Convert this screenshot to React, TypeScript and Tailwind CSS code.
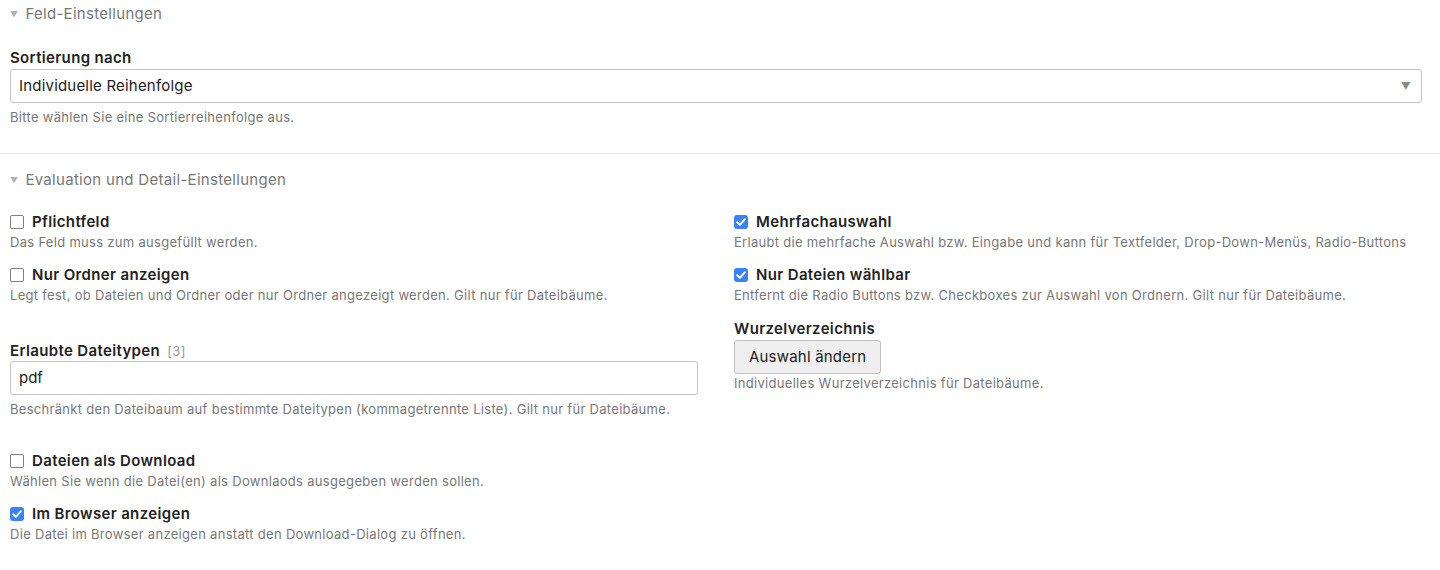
const font = { fontFamily: 'Inter, "Liberation Sans", Arial, sans-serif' };

function Checkbox({ checked }: { checked?: boolean }) {
  if (checked) {
    return (
      <span className="flex h-[14px] w-[14px] shrink-0 items-center justify-center rounded-[3px] bg-[#3a82f6]">
        <svg viewBox="0 0 14 14" className="h-[14px] w-[14px]">
          <path d="M3.2 7.2 L5.9 9.8 L10.8 4.3" fill="none" stroke="#fff" strokeWidth="1.9" strokeLinecap="round" strokeLinejoin="round" />
        </svg>
      </span>
    );
  }
  return <span className="h-[14px] w-[14px] shrink-0 rounded-[2px] border-[1.5px] border-[#808080] bg-white" />;
}

function CheckField({ label, help, checked, className = "" }: { label: string; help: string; checked?: boolean; className?: string }) {
  return (
    <div className={className}>
      <label className="flex items-center gap-2 text-[15px] leading-[18px] font-semibold tracking-[0.35px] text-[#222]">
        <Checkbox checked={checked} />
        {label}
      </label>
      <p className="mt-[3px] text-[13px] leading-[16px] tracking-[0.3px] text-[#777]">{help}</p>
    </div>
  );
}

function Legend({ children }: { children: string }) {
  return (
    <div className="flex items-center gap-[7px] text-[15px] leading-[20px] tracking-[0.3px] text-[#777]">
      <span className="text-[8px] text-[#b0b0b0]">▼</span>
      {children}
    </div>
  );
}

export default function App() {
  return (
    <div className="min-h-[570px] bg-white pt-[4px] text-[#222]" style={font}>
      <div className="pl-[10px] pr-[18px]">
        <Legend>Feld-Einstellungen</Legend>

        <div className="mt-[25px]">
          <div className="text-[15px] leading-[18px] font-semibold tracking-[0.35px]">Sortierung nach</div>
          <div className="mt-[2px] flex h-[34px] items-center justify-between rounded-[3px] border border-[#c4c4c4] pl-[8px] pr-[10px] text-[15px] tracking-[0.2px]">
            <span>Individuelle Reihenfolge</span>
            <span className="text-[10px] text-[#888]">▼</span>
          </div>
          <p className="mt-[6px] text-[13px] leading-[16px] tracking-[0.3px] text-[#777]">Bitte wählen Sie eine Sortierreihenfolge aus.</p>
        </div>
      </div>

      <div className="mt-[28px] border-t border-[#e8e8e8]" />

      <div className="pl-[10px] pr-[18px] pt-[16px]">
        <Legend>Evaluation und Detail-Einstellungen</Legend>

        <div className="mt-[23px] grid grid-cols-[724px_1fr]">
          <div>
            <CheckField label="Pflichtfeld" help="Das Feld muss zum ausgefüllt werden." />
            <CheckField
              className="mt-[16px]"
              label="Nur Ordner anzeigen"
              help="Legt fest, ob Dateien und Ordner oder nur Ordner angezeigt werden. Gilt nur für Dateibäume."
            />

            <div className="mt-[39px]">
              <div className="text-[15px] leading-[18px] font-semibold tracking-[0.35px]">
                Erlaubte Dateitypen <span className="ml-[3px] text-[13px] font-normal text-[#999]">[3]</span>
              </div>
              <div className="mt-[1px] flex h-[34px] w-[688px] items-center rounded-[3px] border border-[#c4c4c4] pl-[8px] text-[15px]">
                pdf
              </div>
              <p className="mt-[6px] text-[13px] leading-[16px] tracking-[0.3px] text-[#777]">
                Beschränkt den Dateibaum auf bestimmte Dateitypen (kommagetrennte Liste). Gilt nur für Dateibäume.
              </p>
            </div>

            <CheckField
              className="mt-[35px]"
              label="Dateien als Download"
              help="Wählen Sie wenn die Datei(en) als Downlaods ausgegeben werden sollen."
            />
            <CheckField
              className="mt-[16px]"
              checked
              label="Im Browser anzeigen"
              help="Die Datei im Browser anzeigen anstatt den Download-Dialog zu öffnen."
            />
          </div>

          <div>
            <CheckField
              checked
              label="Mehrfachauswahl"
              help="Erlaubt die mehrfache Auswahl bzw. Eingabe und kann für Textfelder, Drop-Down-Menüs, Radio-Buttons"
            />
            <CheckField
              className="mt-[16px]"
              checked
              label="Nur Dateien wählbar"
              help="Entfernt die Radio Buttons bzw. Checkboxes zur Auswahl von Ordnern. Gilt nur für Dateibäume."
            />

            <div className="mt-[17px]">
              <div className="text-[15px] leading-[18px] font-semibold tracking-[0.35px]">Wurzelverzeichnis</div>
              <button className="mt-[2px] h-[34px] rounded-[3px] border border-[#c0c0c0] bg-[#efefef] px-[14px] text-[15px] tracking-[0.2px] text-[#222]">
                Auswahl ändern
              </button>
              <p className="mt-[1px] text-[13px] leading-[16px] tracking-[0.3px] text-[#777]">Individuelles Wurzelverzeichnis für Dateibäume.</p>
            </div>
          </div>
        </div>
      </div>
    </div>
  );
}
